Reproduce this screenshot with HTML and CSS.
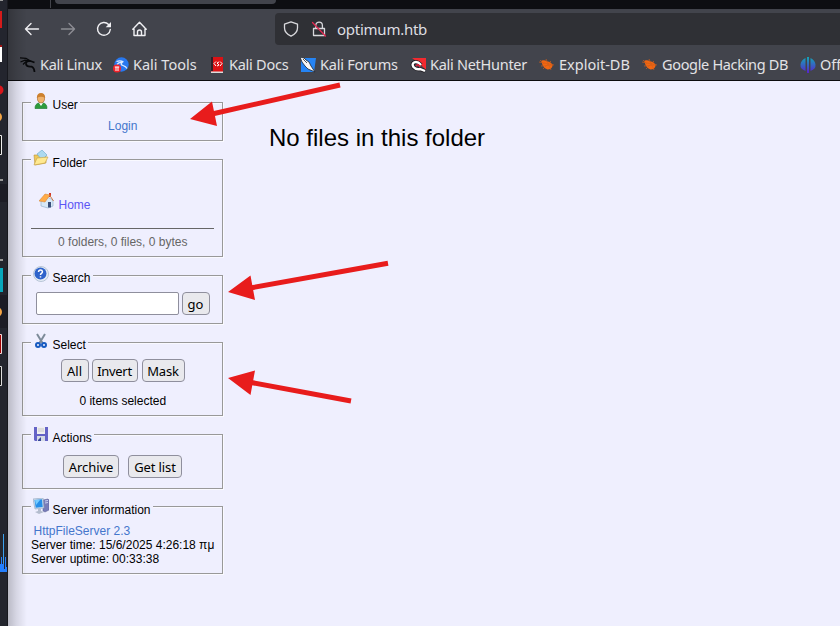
FILE: index.html
```
<!DOCTYPE html>
<html lang="en">
<head>
<meta charset="utf-8">
<title>HFS /</title>
<link rel="stylesheet" href="styles.css">
</head>
<body>
<div class="screen">
  <svg class="desktop" width="8" height="626" viewBox="0 0 8 626">
    <rect width="8" height="626" fill="#23252e"/><path d="M0 184h8v18H0zM0 295h8v33H0z" fill="#1c1c25"/>
    <path d="M0 0h3v1H0zM0 179h3v2H0zM0 259h3v2H0z" fill="#999"/>
    <path d="M0 11h2v17H0z" fill="#d51b1b"/><path d="M0 45h2v3H0z" fill="#a01515"/><path d="M0 47h2v15H0z" fill="#fff"/>
    <circle cx="-1" cy="90" r="4.5" fill="#d8161b"/><circle cx="-3" cy="117" r="5" fill="#f5a545"/><circle cx="-3" cy="312" r="5" fill="#f5a545"/>
    <path d="M0 135.500h1.500v19H0" fill="#111" stroke="#eee"/><path d="M0 268h3v24H0z" fill="#08a8bd"/>
    <path d="M0 334.500h1.500v19H0" fill="#a00000" stroke="#f2dada"/><path d="M0 366.500h1.500v19H0" fill="#111" stroke="#ddd"/>
    <path d="M0 564h1v-7h1v7h1v-30h1v35h1v-12h1v10h1v5H0z" fill="#247fff"/><path d="M3 534h1v29H3z" fill="#3ba0ee"/>
    <path d="M7 0h1v626H7z" fill="#17181e"/>
  </svg>
  <div class="browser">
    <div class="tabs"><i class="divider"></i><i class="tab"></i></div>
    <div class="toolbar">
      <div class="nav">
        <svg width="16" height="16" viewBox="0 0 16 16"><path d="M14.500 8H1.500M7 2.500 1.500 8 7 13.500"/></svg>
        <svg class="dim" width="16" height="16" viewBox="0 0 16 16"><path d="M1.500 8h13M9 2.500 14.500 8 9 13.500"/></svg>
        <svg width="16" height="16" viewBox="0 0 16 16"><path d="M14.300 8.500A6.400 6.400 0 1 1 12.600 3.500"/><path d="M15 1v5.300H9.700z" fill="#f0f0f3" stroke="none"/></svg>
        <svg width="16" height="16" viewBox="0 0 16 16"><path d="M.8 8.200 7.500 1.200 14.200 8.200M2 7v7.500h11V7M5.500 14.500V11q0-2 2-2t2 2v3.500"/></svg>
      </div>
      <div class="url">
        <svg width="16" height="16" viewBox="0 0 16 16"><path d="M8 .8 14.500 3.200V7Q14.500 12 8 15.200 1.500 12 1.500 7V3.200z"/></svg>
        <svg width="16" height="16" viewBox="0 0 16 16"><path d="M4.800 7V4.400a3.300 3.300 0 0 1 6.600 0V7M2.500 7.500h11v7h-11z"/><path d="M1.500 1.500 14.500 15" class="strike"/></svg>
        <span>optimum.htb</span>
      </div>
    </div>
    <div class="bookmarks">
      <div class="mark m1"><svg width="16" height="16" viewBox="0 0 16 16"><path d="M0 .8 6 1.300 10.500 4M.5 5 5 3.200 11 4.200M3 7.500 6 4.500" stroke="#08090b" stroke-width="1.200" fill="none"/><path d="M10.500 4Q5.500 4 6 7t5.500 2.500Q14.500 11 14.500 15M10.500 4l4 1.500" stroke="#08090b" stroke-width="1.700" fill="none"/></svg><span>Kali Linux</span></div>
      <div class="mark m2"><svg width="16" height="16" viewBox="0 0 16 16"><circle cx="8.500" cy="7.500" r="7.200" fill="#2878ef"/><path d="M3.500 4.500q4-1.500 7 .5M4 7.500Q6 5 9 5.500q-2 2 1 3t4 3" fill="none" stroke="#dceaff" stroke-width="1.300"/><circle cx="4" cy="11.500" r="4" fill="#f32128"/><path d="M1.800 10h4.400M3 10v4M5 10v4" stroke="#fff"/></svg><span>Kali Tools</span></div>
      <div class="mark m3"><svg width="16" height="16" viewBox="0 0 16 16"><path d="M2 0h12v15H2z" fill="#db1215"/><path d="M2 0h2v14H2z" fill="#322027"/><path d="M2 14.500h12V16H2z" fill="#ddd"/><path d="M7 4.500 5 6.500 7 9M11 4.500 13 6.500 11 9M10 5 8 6l2 2-2 1" fill="none" stroke="#fff"/></svg><span>Kali Docs</span></div>
      <div class="mark m4"><svg width="16" height="16" viewBox="0 0 16 16"><path d="M1 1h15l-2 14H1z" fill="#2584f4"/><path d="M0 0 4 1 6 3 9 5 11 9 15 15 8 12 5 9 2 5z" fill="#f7f7f7" stroke="#1d2530" stroke-width=".8"/><path d="M3 2 7 6" stroke="#555"/></svg><span>Kali Forums</span></div>
      <div class="mark m5"><svg width="16" height="16" viewBox="0 0 16 16"><path d="M2 1h14v12L11 8z" fill="#f22a2f"/><path d="M15 14 10 12Q6 13 3.500 10 1.500 7 4 5.500 7.500 4 11 8" fill="none" stroke="#18151a" stroke-width="4"/><path d="M15 14 10 12Q6 13 3.500 10 1.500 7 4 5.500 7.500 4 11 8" fill="none" stroke="#fff" stroke-width="2.400"/><path d="M6 9q2-3 4 1" fill="none" stroke="#e4213b" stroke-width="1.600"/></svg><span>Kali NetHunter</span></div>
      <div class="mark m6"><svg width="16" height="16" viewBox="0 0 16 16"><path d="M2.500 3.500Q6 2.500 8 4.500q5 0 5.500 4.500-1 3.500-5 3.500Q3 10.500 2.500 3.500" fill="#f26611"/><path d="m0 5 15 3M2 9l12-1M7 2l5 11M4 12l8-8M1 3l4 4" stroke="#d45f19" stroke-width=".7"/></svg><span>Exploit-DB</span></div>
      <div class="mark m7"><svg width="16" height="16" viewBox="0 0 16 16"><path d="M2.500 3.500Q6 2.500 8 4.500q5 0 5.500 4.500-1 3.500-5 3.500Q3 10.500 2.500 3.500" fill="#f26611"/><path d="m0 5 15 3M2 9l12-1M7 2l5 11M4 12l8-8M1 3l4 4" stroke="#d45f19" stroke-width=".7"/></svg><span>Google Hacking DB</span></div>
      <div class="mark m8"><svg width="16" height="16" viewBox="0 0 16 16"><defs><linearGradient id="off" x2="0" y2="1"><stop stop-color="#12a7b7"/><stop offset="1" stop-color="#5921cd"/></linearGradient></defs><path d="M5.500 1v13Q0 12 .5 7.500 1 3 5.500 1M7 0h2v16H7zM10.500 1Q15 3 15.500 7.500 16 12 10.500 14z" fill="url(#off)"/></svg><span>OffSec</span></div>
    </div>
    <div class="page">
      <div class="panels">
        <section class="box user">
          <h2><svg width="16" height="16" viewBox="0 0 16 16"><path d="M2 15.500q0-5 4-5.500h4q4 .5 4 5.500z" fill="#2d9b3c" stroke="#147329" stroke-width=".6"/><path d="m6 10 2 3 2-3z" fill="#fff"/><path d="M4.500 3h7v4q-1 3-3.500 3T4.500 7z" fill="#efb26c" stroke="#a4652a" stroke-width=".6"/><path d="M3.800 5Q4 0 8 0t4.200 5Q10 3.500 8 3.500T3.800 5" fill="#cd812e"/></svg><span>User</span></h2>
          <a>Login</a>
        </section>
        <section class="box folder">
          <h2><svg width="16" height="16" viewBox="0 0 16 16"><path d="M1 5h4l1-2 7 2v8L2 15z" fill="#eec95a" stroke="#bb9135" stroke-width=".6"/><path d="m4 4 5-4 5 5-5 5z" fill="#acd9ef" stroke="#69a8cd" stroke-width=".6"/><path d="m1 15 3-7 11-1-3 6z" fill="#ffe991" stroke="#c49f45" stroke-width=".6"/></svg><span>Folder</span></h2>
          <div class="home"><svg width="16" height="16" viewBox="0 0 16 16"><path d="m2 7 6-3 6 3v6l-5 2-7-2z" fill="#d8e9f8" stroke="#8cabc8" stroke-width=".6"/><path d="M10 0h2v4h-2z" fill="#d43a27"/><path d="M0 8 6 1l5 1-5 7z" fill="#ffac48" stroke="#d3802c" stroke-width=".5"/><path d="m10.500 2 4 6" stroke="#cb7c45"/><path d="M9 9h3v5.500H9z" fill="#394e79"/></svg><a>Home</a></div>
          <div class="stats">0 folders, 0 files, 0 bytes</div>
        </section>
        <section class="box search">
          <h2><svg width="16" height="16" viewBox="0 0 16 16"><circle cx="8" cy="8" r="7.500" fill="#e6edf6" stroke="#a2b3c7" stroke-width=".7"/><circle cx="7.500" cy="7.500" r="6" fill="#2f63cb"/><path d="M5.500 6q.2-2 2-2t2 1.800q0 1-1.200 1.700-.8.500-.8 1.500M7.500 10.200v1.400" fill="none" stroke="#fff" stroke-width="1.500"/></svg><span>Search</span></h2>
          <div class="row"><input type="text"><button>go</button></div>
        </section>
        <section class="box select">
          <h2><svg width="16" height="16" viewBox="0 0 16 16"><path d="M4 1 9.500 10M12 1 6.500 10" stroke="#7d8b99" stroke-width="2"/><g fill="none" stroke="#175bc0" stroke-width="2"><circle cx="5" cy="12" r="2"/><circle cx="11" cy="12" r="2"/></g></svg><span>Select</span></h2>
          <div class="row"><button>All</button><button>Invert</button><button>Mask</button></div>
          <p>0 items selected</p>
        </section>
        <section class="box actions">
          <h2><svg width="16" height="16" viewBox="0 0 16 16"><path d="M1 1h14v14H2l-1-1z" fill="#6463c6"/><path d="M4 1h8v7H4z" fill="#f0f0f0"/><path d="M5 3h6M5 5h6" stroke="#c9c9c9"/><path d="M4 10h8v5H4z" fill="#d5dbe4"/><path d="m5 14 3-3v4H5z" fill="#384899"/></svg><span>Actions</span></h2>
          <div class="row"><button>Archive</button><button>Get list</button></div>
        </section>
        <section class="box server">
          <h2><svg width="16" height="16" viewBox="0 0 16 16"><path d="m10 2 5-1 1 1v10l-4 2-2-1z" fill="#777cb9" stroke="#575b91" stroke-width=".5"/><path d="m12 3 3-.5M12 5l3-.5" stroke="#c9d0f1"/><path d="m0 1 10-1 1 10-9 1z" fill="#cfddec" stroke="#8ba3bd" stroke-width=".6"/><path d="m1.500 2 7.500-.7.700 7.700-7 .8z" fill="#268fe9"/><path d="m2 2 5 0-4 5z" fill="#75cbff"/><path d="M5 11h3v2l3 1-5 2-4-2 3-1z" fill="#b4bdce"/></svg><span>Server information</span></h2>
          <a>HttpFileServer 2.3</a>
          <div>Server time: 15/6/2025 4:26:18 πμ</div>
          <div>Server uptime: 00:33:38</div>
        </section>
      </div>
      <div class="empty">No files in this folder</div>
    </div>
    <div class="edge"></div>
  </div>
  <svg class="arrows" width="840" height="626" viewBox="0 0 840 626">
    <path d="M340 85 212 114M388 263.300 250 288M351 401 250 382.300" stroke="#e81c1c" stroke-width="5"/>
    <path d="m190 119 22-17.500 5 24.500zM228 292l22.500-16.500 4.500 24.500zM228 378l27-7.500-4.500 24.500z" fill="#e81c1c"/>
  </svg>
</div>
</body>
</html>
```
FILE: styles.css
```
* { box-sizing: border-box; }
body { margin: 0; overflow: hidden; }
.screen { position: relative; display: flex; width: 840px; height: 626px; overflow: hidden; }
.desktop { flex: none; }
svg { display: block; flex: none; }
.browser { position: relative; width: 832px; background: #efeffe; overflow: hidden; }
.tabs { display: flex; height: 9px; background: #0d0e12; }
.divider { width: 1px; height: 8px; margin-left: 42px; background: #42434a; }
.tab { width: 221px; height: 4px; margin-left: 4px; border-radius: 0 0 4px 4px; background: #42444c; }
.toolbar { display: flex; height: 40px; padding-top: 4px; background: #42444c; }
.nav { display: flex; gap: 20px; width: 267px; padding: 8px 0 0 16px; }
.nav svg, .url svg { fill: none; stroke: #f0f0f3; stroke-width: 1.4; stroke-linecap: round; stroke-linejoin: round; }
.nav .dim { stroke: #8c8d93; }
.url { display: flex; flex: 1; align-items: center; height: 32px; padding-left: 8px; border-radius: 4px 0 0 4px; background: #2f3035; color: #dedee2; font: 15px/32px "Noto Sans", sans-serif; letter-spacing: -.25px; }
.url svg { margin-right: 12px; stroke: #d8d8dc; stroke-width: 1.3; }
.url svg + svg { margin-right: 10px; }
.url .strike { stroke: #e22850; }
.bookmarks { display: flex; height: 32px; background: #42444c; border-bottom: 1px solid #0c0c0e; color: #e2e2e5; font: 14.500px/31px "Noto Sans", sans-serif; white-space: nowrap; padding-left: 12px; }
.mark { display: flex; flex: none; align-items: center; gap: 4px; }
.m1 { width: 93px; letter-spacing: -.35px; }
.m2 { width: 96px; letter-spacing: 0; }
.m3 { width: 91px; letter-spacing: -.25px; }
.m4 { width: 110px; letter-spacing: -.22px; }
.m5 { width: 128px; letter-spacing: -.28px; }
.m6 { width: 103px; }
.m7 { width: 159px; letter-spacing: -.33px; }
.m6 svg, .m7 svg { margin-left: 1px; margin-right: -1px; }
.m6, .m7 { gap: 5px; }
.page { display: flex; padding: 21px 0 0 14px; font: 12px/14px "Liberation Sans", sans-serif; color: #000; }
.panels { width: 201px; }
.box { border: 1px solid #999; box-shadow: 1px 1px #fafaff, inset 1px 1px #f9f9ff; margin-bottom: 18px; padding: 0 8px; text-align: center; }
.box h2 { display: flex; gap: 3.5px; width: max-content; height: 15px; margin: -5px 0 0; padding: 0 2px; background: #efeffe; font: inherit; }
.box h2 svg { margin-top: -5px; }
.box h2 span { padding-top: 1px; }
.user h2 span, .search h2 span, .select h2 span { padding-top: 0; }
.server h2 svg, .actions h2 svg { margin-top: -4px; }
.box a { color: #4476cc; }
.user { height: 39px; }
.user a { display: block; margin-top: 6px; padding-left: .5px; }
.folder { height: 98px; }
.home { display: flex; gap: 3.5px; margin: 23px 0 0 8px; }
.box .home a { color: #5b55f5; padding-top: 5px; }
.stats { margin-top: 16px; padding: 6px 0 0 .5px; border-top: 1px solid #666; color: #666; }
.search { height: 49px; }
.row { display: flex; justify-content: center; gap: 3px; }
.search .row { margin-top: 6px; }
input { width: 143px; height: 23px; padding: 0; border: 1px solid #8f8f9d; border-radius: 2px; background: #fff; }
button { display: flex; justify-content: center; height: 23px; padding: 2px 0 0; border: 1px solid #8f8f9d; border-radius: 4px; background: #e9e9ed; color: #000; font: 13px/19px "Noto Sans", sans-serif; white-space: nowrap; }
.search button { width: 28px; }
.select { height: 74px; }
.select .row { margin-top: 6px; gap: 4px; }
.select button:nth-child(1) { width: 28px; }
.select button:nth-child(2) { width: 46px; margin-left: -1px; letter-spacing: -.3px; }
.select button:nth-child(3) { width: 43px; letter-spacing: -.2px; }
.select p { margin: 12px 0 0; padding-left: .5px; }
.actions { height: 55px; margin-bottom: 17px; }
.actions .row { margin-top: 10px; gap: 9px; }
.actions button:nth-child(1) { width: 56px; letter-spacing: -.1px; }
.actions button:nth-child(2) { width: 54px; letter-spacing: -.1px; }
.server { height: 68px; text-align: left; white-space: nowrap; }
.server a { display: block; margin: 7px 0 0 2.5px; }
.empty { margin: 22px 0 0 46px; font-size: 24px; line-height: 28px; }
.edge { position: absolute; left: 0; top: 9px; bottom: 0; width: 19px; background: linear-gradient(90deg, rgba(0,0,0,.22), rgba(0,0,0,.1) 45%, transparent); }
.arrows { position: absolute; left: 0; top: 0; }
```
